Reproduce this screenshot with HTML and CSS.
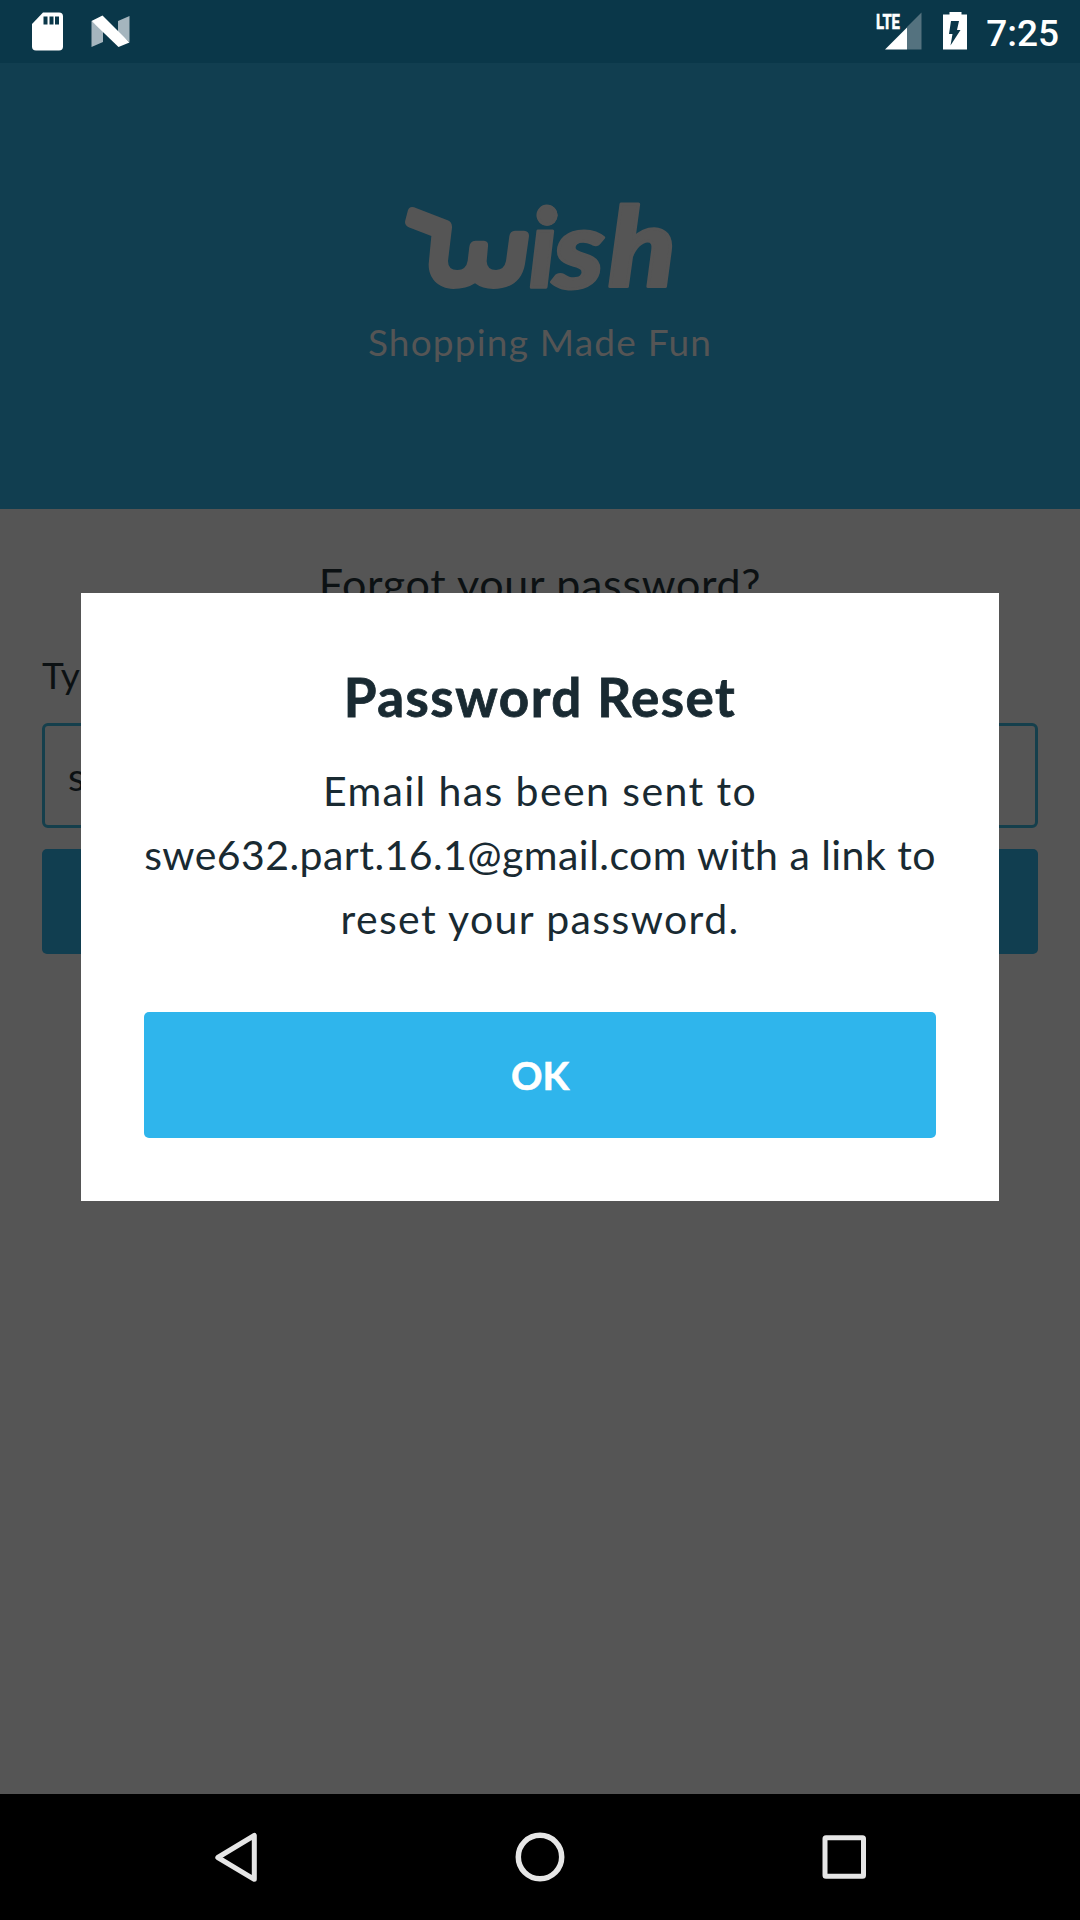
FILE: index.html
```html
<!DOCTYPE html>
<html lang="en">
<head>
<meta charset="utf-8">
<title>Wish - Password Reset</title>
<link rel="stylesheet" href="styles.css">
</head>
<body>
<div class="screen">
  <header class="status">
    <svg class="status-left" viewBox="0 0 140 63" width="140" height="63">
      <path fill="#fff" d="M43 12.500H59Q63 12.500 63 16.500V46.500Q63 50.500 59 50.500H36Q32 50.500 32 46.500V24Z"/>
      <path fill="#0a3749" d="M43.500 16.500h4v8h-4zM49.500 16.500h4v8h-4zM55 16.500h4v8h-4z"/>
      <path fill="#a5b5be" d="M91.500 21 103 30V42L91.500 47ZM118 21 129.500 16V42L118 33Z"/>
      <path fill="#fff" d="M91.500 21 102.500 15.500 129.500 42.500 118.500 47Z"/>
    </svg>
    <div class="status-right">
      <svg viewBox="870 0 100 63" width="100" height="63">
        <text class="lte" x="876" y="29" textLength="24" lengthAdjust="spacingAndGlyphs">LTE</text>
        <path fill="#54727f" d="M907 27 921.500 12.500V49.500H907Z"/>
        <path fill="#fff" d="M885 49.500 907 27.500V49.500Z"/>
        <path fill="#fff" d="M943 14.500h6.500v-2.500h12v2.500H967V49.500H943Z"/>
        <path fill="#0a3749" d="M951 21h8l-2 9h3.500L950.500 45.500 952.500 34H949Z"/>
      </svg>
      <span class="time">7:25</span>
    </div>
  </header>
  <section class="hero">
    <svg class="logo" viewBox="0 0 900 330" width="300" height="110" role="img" aria-label="wish">
      <path d="M72 52 173 91Q187 97 186 113L174 213Q174 240 202 240Q229 239 233 212L238 170Q240 153 256 152H282Q296 153 294 169L290 214Q291 240 318 240Q343 239 348 213L358 139Q360 123 375 122H402Q418 123 417 139L405 222C396 276 357 297 310 297Q277 297 255 280Q229 297 190 297C143 295 115 263 116 222L124 138 56 112Q42 105 46 91L54 60Q59 48 72 52Z"/>
      <circle cx="472" cy="76" r="31"/>
      <text class="wordmark" x="417" y="292">i</text>
      <text class="wordmark" transform="translate(490 293) scale(1.16 1)">s</text>
      <text class="wordmark" transform="translate(654 292) scale(1.15 1.02)">h</text>
    </svg>
    <p class="tagline">Shopping Made Fun</p>
  </section>
  <main class="form">
    <h1 class="form-title">Forgot your password?</h1>
    <div class="label">Type</div>
    <div class="field">swe632</div>
    <div class="submit"></div>
  </main>
  <nav class="nav">
    <svg viewBox="0 0 1080 126" width="1080" height="126" fill="none" stroke="#e6e6e6" stroke-width="5" stroke-linejoin="round">
      <path d="M254.300 41.500V85.300L217.800 63.500Z"/>
      <circle cx="540" cy="63" r="21.700" stroke-width="5.500"/>
      <rect x="825" y="43.800" width="38.500" height="38.500" rx="1"/>
    </svg>
  </nav>
  <div class="dialog">
    <h2 class="dialog-title">Password Reset</h2>
    <p class="message"><span class="wide">Email has been sent to</span><span>swe632.part.16.1@gmail.com with a link to</span><span class="wide">reset your password.</span></p>
    <button class="ok">OK</button>
  </div>
</div>
</body>
</html>
```
FILE: styles.css
```css
* { box-sizing: border-box; margin: 0; padding: 0; }
body { width: 1080px; height: 1920px; overflow: hidden; font-family: Lato, sans-serif; font-variant-ligatures: none; }
.screen { position: relative; width: 1080px; height: 1920px; display: flex; flex-direction: column; background: #555; }
.status { height: 63px; display: flex; justify-content: space-between; background: #0a3749; }
.status-right { display: flex; padding-right: 21px; gap: 16px; }
.time { font: 500 37px/67px Roboto, sans-serif; color: #fff; }
.lte { font: 700 21px Roboto, sans-serif; fill: #fff; stroke: #fff; stroke-width: .6px; }
.hero { height: 446px; padding-top: 127px; display: flex; flex-direction: column; align-items: center; gap: 20px; background: #113e50; }
.logo { fill: #555; overflow: visible; }
.wordmark { font: italic 900 325px Lato, sans-serif; stroke: #555; stroke-width: 9px; stroke-linejoin: round; }
.tagline { font-size: 37px; line-height: 44px; letter-spacing: 1.2px; color: #555; white-space: nowrap; }
.form { flex: 1; padding: 50px 42px 0; color: #0c1113; }
.form-title { font-size: 43px; line-height: 50px; font-weight: 400; letter-spacing: .7px; text-align: center; margin-bottom: 44px; }
.label { font-size: 37px; line-height: 44px; margin-bottom: 26px; }
.field { height: 105px; border: 3px solid #153f4c; border-radius: 6px; padding-left: 23px; font-size: 39px; line-height: 101px; margin-bottom: 21px; }
.submit { height: 105px; border-radius: 5px; background: #113e50; }
.nav { height: 126px; background: #000; }
.nav svg { display: block; }
.dialog { position: absolute; left: 81px; top: 593px; width: 918px; height: 608px; padding: 72px 63px 63px; background: #fff; color: #192a32; text-align: center; }
.dialog-title { font-size: 53px; line-height: 64px; font-weight: 700; letter-spacing: 1.5px; -webkit-text-stroke: .8px #192a32; margin-bottom: 30px; }
.message { font-size: 41px; line-height: 64px; letter-spacing: .45px; margin-bottom: 61px; white-space: nowrap; }
.message span { display: block; }
.message .wide { letter-spacing: 1.4px; }
.ok { display: block; width: 792px; height: 126px; border: 0; border-radius: 5px; background: #2fb5ec; color: #fff; font: 700 39px/126px Lato, sans-serif; -webkit-text-stroke: .6px #fff; }
```
